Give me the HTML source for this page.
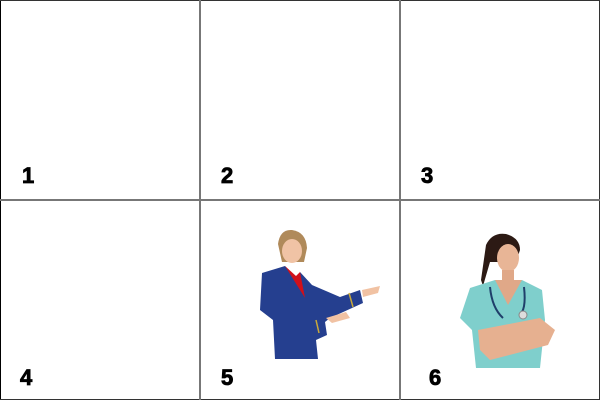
<!DOCTYPE html>
<html><head><style>
html,body{margin:0;padding:0;background:#fff}
.w{position:relative;width:600px;height:400px;overflow:hidden;font-family:"Liberation Sans",Arial,sans-serif}
.n{position:absolute;font-weight:bold;font-size:22px;color:#000;line-height:1;-webkit-text-stroke:0.8px #000}
.v{position:absolute;top:0;width:2px;height:400px;background:#777}
.h{position:absolute;left:0;height:2px;width:600px;background:#777}
</style></head><body><div class="w">
<div style="position:absolute;left:0;top:0;width:1px;height:400px;background:#000"></div>
<div style="position:absolute;right:0;top:0;width:1px;height:400px;background:#333"></div>
<div style="position:absolute;left:0;top:0;width:600px;height:1px;background:#333"></div>
<div style="position:absolute;left:0;bottom:0;width:600px;height:1px;background:#333"></div>
<div class="v" style="left:199px"></div>
<div class="v" style="left:399px"></div>
<div class="h" style="top:199px"></div>
<div class="n" style="left:22px;top:165px">1</div>
<div class="n" style="left:221px;top:165px">2</div>
<div class="n" style="left:421px;top:165px">3</div>
<div class="n" style="left:20px;top:367px">4</div>
<div class="n" style="left:221px;top:367px">5</div>
<div class="n" style="left:429px;top:367px">6</div>
<svg style="position:absolute;left:0;top:0" width="600" height="400">
<path d="M278 244 Q280 229 292 230 Q306 232 307 248 L304 262 L282 262 Z" fill="#b08a5a"/>
<ellipse cx="292" cy="251" rx="10" ry="12" fill="#f0c3a5"/>
<path d="M262 273 L285 266 L300 272 L312 285 L340 297 L360 290 L363 303 L330 318 L325 322 L327 335 L316 340 L318 359 L275 359 L273 320 L260 310 Z" fill="#253f8f"/>
<path d="M285 266 L300 272 L305 298 Z" fill="#d0101a"/>
<path d="M285 266 L292 264 L300 272 L296 276 Z" fill="#fff"/>
<path d="M362 290 L380 286 L378 293 L363 297 Z" fill="#f1c2a3"/>
<path d="M326 318 L346 312 L350 318 L332 323 Z" fill="#f1c2a3"/>
<line x1="349" y1="293" x2="353" y2="307" stroke="#c9a93a" stroke-width="1.5"/>
<line x1="316" y1="320" x2="319" y2="333" stroke="#c9a93a" stroke-width="1.5"/>
<path d="M486 245 Q492 232 506 234 Q520 238 520 250 L516 262 L490 262 L483 286 L481 280 Z" fill="#2c1a14"/>
<ellipse cx="508" cy="258" rx="11" ry="14" fill="#e8b596"/>
<rect x="502" y="270" width="12" height="12" fill="#e0a888"/>
<path d="M470 288 L495 280 L522 280 L542 290 L545 320 L540 368 L476 368 L472 330 L460 318 Z" fill="#7fcfcc"/>
<path d="M495 280 L508 305 L522 280 Z" fill="#e0a888"/>
<path d="M478 330 L540 318 L555 330 L548 345 L490 360 L480 350 Z" fill="#e6b090"/>
<path d="M490 287 Q492 308 503 318 M524 287 Q526 305 522 312" stroke="#1f3f6a" stroke-width="2" fill="none"/>
<circle cx="523" cy="315" r="4" fill="#ddd" stroke="#888"/>
</svg>
</div></body></html>
